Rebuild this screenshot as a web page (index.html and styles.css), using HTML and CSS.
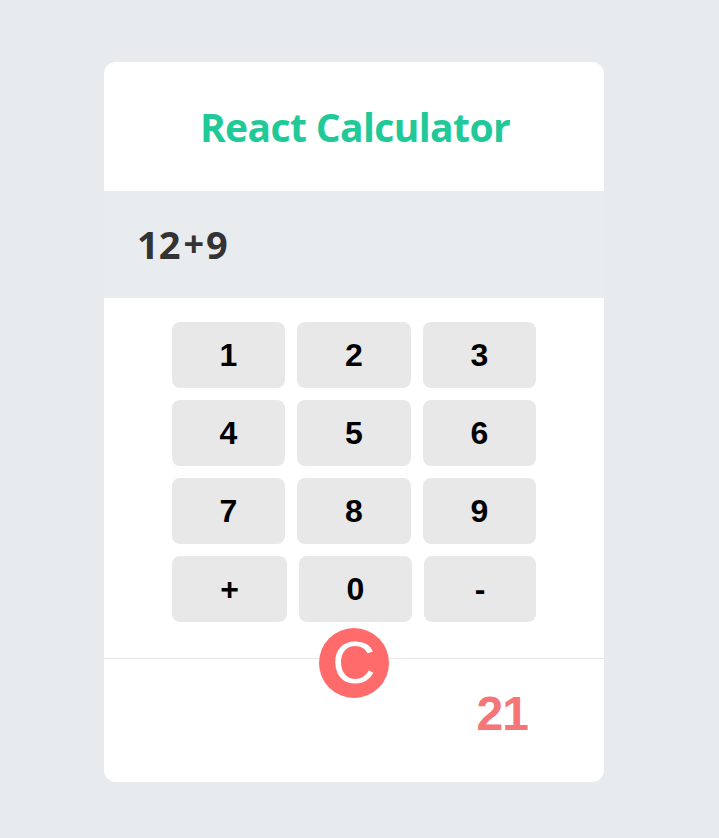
FILE: index.html
```html
<!DOCTYPE html>
<html>
<head>
<meta charset="utf-8">
<link rel="stylesheet" href="styles.css">
</head>
<body>
<div class="card">
  <div class="header"><h1 class="title">React Calculator</h1></div>
  <div class="display">12<span class="op">+</span>9</div>
  <div class="keypad">
    <div class="row">
      <button class="key">1</button><button class="key">2</button><button class="key">3</button>
    </div>
    <div class="row">
      <button class="key">4</button><button class="key">5</button><button class="key">6</button>
    </div>
    <div class="row">
      <button class="key">7</button><button class="key">8</button><button class="key">9</button>
    </div>
    <div class="row row-ops">
      <button class="key">+</button><button class="key">0</button><button class="key">-</button>
    </div>
  </div>
  <div class="footer">
    <button class="clear">C</button>
    <div class="result">21</div>
  </div>
</div>
</body>
</html>
```
FILE: styles.css
```css
html, body { margin: 0; padding: 0; }
body {
  background: #e8ebee;
  width: 719px;
  height: 838px;
  overflow: hidden;
}
.card {
  margin: 62px 0 0 104px;
  width: 500px;
  height: 720px;
  background: #fff;
  border-radius: 12px;
  display: flex;
  flex-direction: column;
}
.header {
  height: 129px;
  display: flex;
  align-items: center;
  justify-content: center;
}
.title {
  margin: 0 0 0 2px;
  font-family: "Open Sans", sans-serif;
  font-weight: 700;
  font-size: 39px;
  color: #20c997;
  letter-spacing: -0.6px;
}
.display {
  height: 107px;
  background: #e9ecef;
  box-sizing: border-box;
  padding-left: 33px;
  padding-bottom: 2px;
  display: flex;
  align-items: center;
  font-family: "Open Sans", sans-serif;
  font-weight: 700;
  font-size: 38px;
  color: #333;
}
.op {
  margin: 0 2px 0 3px;
  font-size: 36px;
}
.keypad {
  padding: 24px 0 36px 68px;
  display: flex;
  flex-direction: column;
  gap: 12px;
}
.row {
  display: grid;
  grid-template-columns: 113px 114px 113px;
  grid-auto-rows: 66px;
  gap: 12px;
}
.row-ops {
  grid-template-columns: 115px 113px 112px;
}
.key {
  border: none;
  background: #e8e8e8;
  border-radius: 8px;
  font-family: "Liberation Sans", Arial, sans-serif;
  font-weight: 700;
  font-size: 32px;
  color: #000;
  padding: 0;
}
.footer {
  position: relative;
  flex: 1;
  border-top: 1px solid #e8e8e8;
  display: flex;
  justify-content: flex-end;
  padding: 31px 76px 0 0;
}
.clear {
  position: absolute;
  left: 215px;
  top: -31px;
  width: 70px;
  height: 70px;
  border-radius: 50%;
  border: none;
  background: #ff6b6b;
  color: #fff;
  font-family: "Liberation Sans", Arial, sans-serif;
  font-size: 60px;
  line-height: 70px;
  padding: 0;
}
.result {
  font-family: "Liberation Sans", Arial, sans-serif;
  font-weight: 700;
  font-size: 48px;
  letter-spacing: -1px;
  color: #f47679;
  line-height: 1;
}
```
